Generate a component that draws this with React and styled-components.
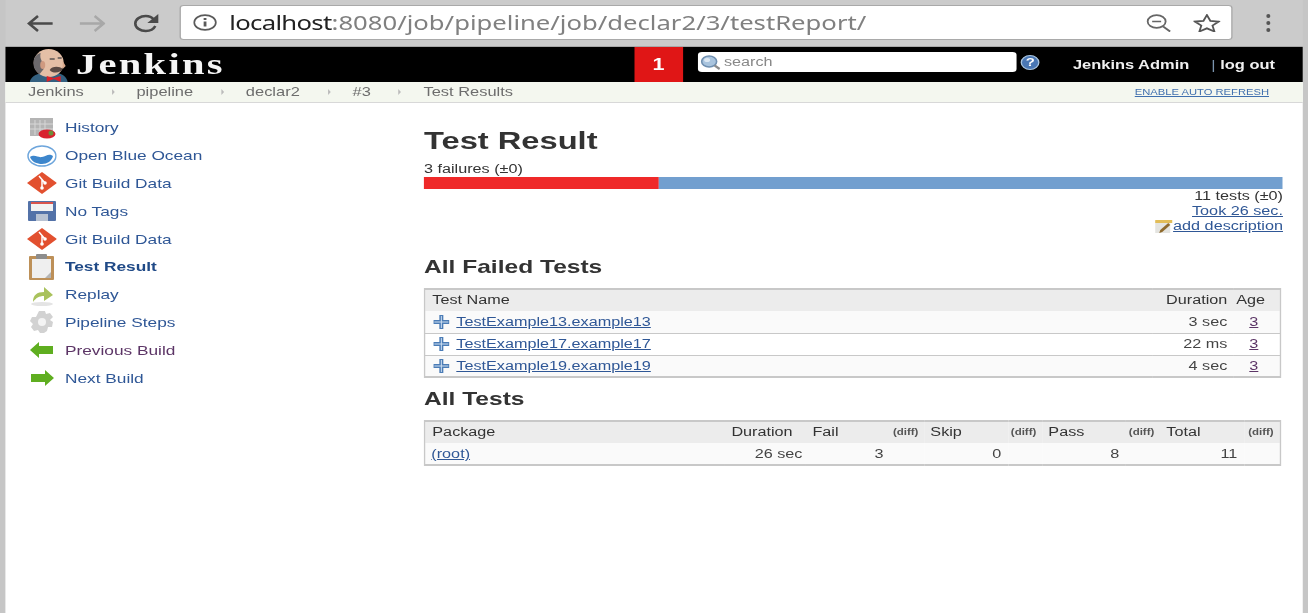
import React from "react";
import styled, { createGlobalStyle } from "styled-components";

// the whole shot is wider than it is tall, so the page is laid out narrow and
// stretched; x() turns a width read off the screenshot into a layout width
const SX = 1.35;
const x = (px) => `${px / SX}px`;

const GlobalStyle = createGlobalStyle`
  html, body { margin: 0; padding: 0; background: #fff; overflow: hidden; }
  body { font-family: "Liberation Sans", Arial, sans-serif; }
`;

const sideItems = [
  { icon: "history", label: "History" },
  { icon: "ocean", label: "Open Blue Ocean" },
  { icon: "git", label: "Git Build Data" },
  { icon: "disk", label: "No Tags" },
  { icon: "git", label: "Git Build Data" },
  { icon: "clipboard", label: "Test Result", active: true },
  { icon: "replay", label: "Replay" },
  { icon: "gear", label: "Pipeline Steps" },
  { icon: "prev", label: "Previous Build", visited: true },
  { icon: "next", label: "Next Build" },
];

const crumbs = ["Jenkins", "pipeline", "declar2", "#3"];

const failed = [
  { name: "TestExample13.example13", duration: "3 sec" },
  { name: "TestExample17.example17", duration: "22 ms" },
  { name: "TestExample19.example19", duration: "4 sec" },
];

// drawn in screen pixels, squeezed here and stretched back by the frame transform
function Glyph({ w, h, children }) {
  return (
    <svg width={w / SX} height={h} viewBox={`0 0 ${w} ${h}`} preserveAspectRatio="none" style={{ flex: "none" }}>
      {children}
    </svg>
  );
}

function ArrowIcon({ flip, color }) {
  return (
    <Glyph w={26} h={17}>
      <path
        d={flip ? "M0 8.5h23M15 1l9 7.5-9 7.5" : "M26 8.5H3M11 1L2 8.5l9 7.5"}
        stroke={color}
        strokeWidth="2.6"
        fill="none"
      />
    </Glyph>
  );
}

function ReloadIcon() {
  return (
    <Glyph w={27} h={19}>
      <path d="M21.5 5.5C19.5 3 17 2 13.5 2 8 2 3 5 3 9.5S8 17 13.5 17c4.5 0 8-2 9.5-5" stroke="#4a4a4a" strokeWidth="2.6" fill="none" />
      <path d="M26 0v9H15z" fill="#4a4a4a" />
    </Glyph>
  );
}

function InfoIcon() {
  return (
    <Glyph w={24} h={17}>
      <ellipse cx="12" cy="8.5" rx="10.8" ry="7.4" fill="none" stroke="#5a5a5a" strokeWidth="1.7" />
      <rect x="10.6" y="7.5" width="2.8" height="5" fill="#5a5a5a" />
      <rect x="10.6" y="4" width="2.8" height="2" fill="#5a5a5a" />
    </Glyph>
  );
}

function ZoomIcon() {
  return (
    <Glyph w={25} h={18}>
      <ellipse cx="10.5" cy="7.5" rx="9" ry="6.4" fill="none" stroke="#666" strokeWidth="1.8" />
      <path d="M6 7.5h9" stroke="#666" strokeWidth="1.6" />
      <path d="M17 12.5l7 5" stroke="#666" strokeWidth="2" />
    </Glyph>
  );
}

function StarIcon() {
  return (
    <Glyph w={27} h={18}>
      <path d="M13.5 1l3.4 5.8 8.6.8-6.4 4 1.9 5.9-7.5-3.2L6 17.5 7.9 11.6 1.5 7.6l8.6-.8z" fill="none" stroke="#555" strokeWidth="1.8" />
    </Glyph>
  );
}

function SearchGlass() {
  return (
    <Glyph w={20} h={15}>
      <ellipse cx="8.5" cy="6.5" rx="7.5" ry="5.5" fill="#a9c4de" stroke="#6f8fb0" strokeWidth="1.6" />
      <ellipse cx="6.5" cy="5" rx="3" ry="2" fill="#dce8f3" />
      <path d="M14 10.5l5 3.5" stroke="#8c8c8c" strokeWidth="2.2" />
    </Glyph>
  );
}

function SideIcon({ type }) {
  if (type === "history") {
    return (
      <Glyph w={30} h={22}>
        <rect x="3" y="1" width="23" height="18" fill="#b4b4b4" />
        <path d="M8 3v15M13 3v15M18 3v15M3 7h23M3 12h23" stroke="#d8d8d8" />
        <ellipse cx="20" cy="17" rx="8.5" ry="4.5" fill="#d8232f" />
        <circle cx="24" cy="16" r="2.5" fill="#6b8f3a" />
      </Glyph>
    );
  }
  if (type === "ocean") {
    return (
      <Glyph w={30} h={22}>
        <ellipse cx="15" cy="11" rx="14" ry="10" fill="#fff" stroke="#6ea6dc" strokeWidth="1.5" />
        <path d="M3 12c5-3 8 1 12 0s7-4 11-1c-1 5-6 8-11 8S5 17 3 12z" fill="#3d86cc" />
      </Glyph>
    );
  }
  if (type === "git") {
    return (
      <Glyph w={30} h={22}>
        <path d="M15 0l15 11-15 11L0 11z" fill="#e2502f" />
        <path d="M12 4l6 7M15 8v8" stroke="#fff" strokeWidth="1.5" />
        <circle cx="18" cy="11" r="1.8" fill="#fff" />
        <circle cx="15" cy="16" r="1.8" fill="#fff" />
      </Glyph>
    );
  }
  if (type === "disk") {
    return (
      <Glyph w={30} h={22}>
        <rect x="1" y="1" width="28" height="20" rx="1" fill="#5372a8" />
        <rect x="4" y="2" width="22" height="9" fill="#f2f2f2" />
        <rect x="4" y="2" width="22" height="2" fill="#d9544d" />
        <rect x="9" y="14" width="12" height="7" fill="#b8c2d2" />
      </Glyph>
    );
  }
  if (type === "clipboard") {
    return (
      <Glyph w={30} h={26}>
        <rect x="2" y="2" width="25" height="24" rx="1" fill="#bd9058" />
        <rect x="5" y="5" width="19" height="19" fill="#efefef" />
        <path d="M24 18v6h-6z" fill="#b5b5b5" />
        <rect x="9" y="0" width="11" height="5" rx="1" fill="#8d8d8d" />
      </Glyph>
    );
  }
  if (type === "replay") {
    return (
      <Glyph w={30} h={24}>
        <ellipse cx="15" cy="21" rx="11" ry="2" fill="#e4e4e4" />
        <path d="M6 19c0-7 4-10 11-10V4l9 8-9 6v-5c-5 0-8 2-11 6z" fill="#a9c25c" />
      </Glyph>
    );
  }
  if (type === "gear") {
    return (
      <Glyph w={30} h={24}>
        <path
          d="M12 1h6l1 3 4-1 3 4-3 3 3 2-1 5-4 0-1 4-3 2h-4l-2-3-4 1-3-4 2-3-3-3 2-4 4 0z"
          fill="#d2d2d2"
        />
        <circle cx="15" cy="12" r="4" fill="#f4f4f4" />
      </Glyph>
    );
  }
  const points = type === "prev"
    ? "3,11 12,3 12,7 26,7 26,15 12,15 12,19"
    : "27,11 18,3 18,7 4,7 4,15 18,15 18,19";
  return (
    <Glyph w={30} h={22}>
      <polygon points={points} fill="#5fae20" />
    </Glyph>
  );
}

function JenkinsHead() {
  return (
    <Glyph w={40} h={34}>
      <path d="M0 34c1-5 6-8 12-9h16c5 1 9 4 10 9z" fill="#34607f" />
      <ellipse cx="19" cy="15" rx="15" ry="14" fill="#e4bfa6" />
      <path d="M33 13l3 5-3 3z" fill="#d9a98c" />
      <path d="M4 17C3 11 6 6 11 5c-1 3 0 6 1 8l2 8-4 5c-3-2-6-5-6-9z" fill="#6b686b" />
      <ellipse cx="13" cy="17" rx="2.5" ry="4" fill="#cf9a80" />
      <path d="M20 11h5M28 10h4" stroke="#5b5452" strokeWidth="1.4" />
      <path d="M20 22c2-4 10-4 13-1-2 4-10 5-13 1z" fill="#5a4a44" />
      <path d="M17 34l7-3 7 3v-6l-7 2-7-2z" fill="#d8222a" />
    </Glyph>
  );
}

function ExpandIcon() {
  return (
    <Glyph w={16} h={14}>
      <path d="M6 0h4v5h6v4h-6v5H6V9H0V5h6z" fill="#4b7cb6" />
      <path d="M8 1v12M1 7h14" stroke="#cfe0f2" strokeWidth="1" />
    </Glyph>
  );
}

function NoteIcon() {
  return (
    <Glyph w={19} h={15}>
      <rect x="1" y="2" width="15" height="12" fill="#e4e4e0" />
      <rect x="1" y="1" width="17" height="3" fill="#e2bd58" />
      <path d="M6 11l8-7 2 2-8 7-3 1z" fill="#8f6a2c" />
    </Glyph>
  );
}

export default function App() {
  return (
    <>
      <GlobalStyle />
      <Frame>
        <Toolbar>
          <NavGroup>
            <ArrowIcon color="#4a4a4a" />
            <ArrowIcon flip color="#a8a8a8" />
            <ReloadIcon />
          </NavGroup>
          <Omnibox>
            <InfoIcon />
            <Url>
              <strong>localhost</strong>:8080/job/pipeline/job/declar2/3/testReport/
            </Url>
            <OmniIcons>
              <ZoomIcon />
              <StarIcon />
            </OmniIcons>
          </Omnibox>
          <MenuDots><i /><i /><i /></MenuDots>
        </Toolbar>
        <Page>
          <Header>
            <Logo>
              <JenkinsHead />
              <LogoText>Jenkins</LogoText>
            </Logo>
            <Badge>1</Badge>
            <SearchBox>
              <SearchGlass />
              <span>search</span>
            </SearchBox>
            <HelpDot>?</HelpDot>
            <UserLink>Jenkins Admin</UserLink>
            <LogOut><em>|</em> log out</LogOut>
          </Header>
          <Breadcrumbs>
            {crumbs.map((c) => (
              <React.Fragment key={c}>
                <Crumb>{c}</Crumb>
                <CrumbArrow />
              </React.Fragment>
            ))}
            <Crumb>Test Results</Crumb>
            <AutoRefresh href="#">ENABLE AUTO REFRESH</AutoRefresh>
          </Breadcrumbs>
          <Body>
            <Sidebar>
              {sideItems.map((item, i) => (
                <SideItem key={i}>
                  <IconSlot><SideIcon type={item.icon} /></IconSlot>
                  <SideLabel $active={item.active} $visited={item.visited}>{item.label}</SideLabel>
                </SideItem>
              ))}
            </Sidebar>
            <Main>
              <Title>Test Result</Title>
              <Failures>3 failures (±0)</Failures>
              <ResultBar>
                <BarPart $color="#ef2929" style={{ width: `${(3 / 11.0) * 100}%` }} />
                <BarPart $color="#729fcf" style={{ flex: 1 }} />
              </ResultBar>
              <Summary>
                <div>11 tests (±0)</div>
                <SummaryLink href="#">Took 26 sec.</SummaryLink>
                <Description><NoteIcon /><SummaryLink href="#">add description</SummaryLink></Description>
              </Summary>
              <FailedHeading>All Failed Tests</FailedHeading>
              <Table>
                <thead>
                  <HeadRow>
                    <Th $pl={7}>Test Name</Th>
                    <Th $w={80} $right>Duration</Th>
                    <Th $w={47} $pl={3}>Age</Th>
                  </HeadRow>
                </thead>
                <tbody>
                  {failed.map((t) => (
                    <Row key={t.name}>
                      <Td $pl={8}>
                        <TestName><ExpandIcon /><a href="#">{t.name}</a></TestName>
                      </Td>
                      <Td $right>{t.duration}</Td>
                      <Td $pl={3}><AgeLink href="#">3</AgeLink></Td>
                    </Row>
                  ))}
                </tbody>
              </Table>
              <TestsHeading>All Tests</TestsHeading>
              <Table>
                <thead>
                  <HeadRow>
                    <Th $pl={7}>Package</Th>
                    <Th $w={81} $pl={7}>Duration</Th>
                    <Th $w={85} $pl={7}>Fail</Th>
                    <Diff $w={34}>(diff)</Diff>
                    <Th $w={84}>Skip</Th>
                    <Diff $w={34}>(diff)</Diff>
                    <Th $w={84}>Pass</Th>
                    <Diff $w={34}>(diff)</Diff>
                    <Th $w={84}>Total</Th>
                    <Diff $w={36}>(diff)</Diff>
                  </HeadRow>
                </thead>
                <tbody>
                  <Row>
                    <Td $pl={6}><a href="#">(root)</a></Td>
                    <Td $right $pr={3}>26 sec</Td>
                    <Td $right $pr={7}>3</Td>
                    <Td />
                    <Td $right $pr={7}>0</Td>
                    <Td />
                    <Td $right $pr={7}>8</Td>
                    <Td />
                    <Td $right $pr={7}>11</Td>
                    <Td />
                  </Row>
                </tbody>
              </Table>
            </Main>
          </Body>
        </Page>
      </Frame>
    </>
  );
}

const Frame = styled.div`
  width: ${x(1308)};
  height: 613px;
  box-sizing: border-box;
  padding: 0 ${x(5)};
  background: #c6c6c6;
  display: flex;
  flex-direction: column;
  overflow: hidden;
  transform: scaleX(${SX});
  transform-origin: 0 0;
  filter: blur(0.4px);
`;

const Toolbar = styled.div`
  height: 46px;
  flex: none;
  display: flex;
  align-items: center;
  padding-left: ${x(22)};
  background: #cbcbcb;
  border-bottom: 1px solid #a8a8a8;
`;

const NavGroup = styled.div`
  width: ${x(153)};
  flex: none;
  display: flex;
  align-items: center;
  gap: ${x(27)};
`;

const Omnibox = styled.div`
  width: ${x(1053)};
  height: 35px;
  flex: none;
  box-sizing: border-box;
  display: flex;
  align-items: center;
  padding: 0 ${x(11)} 0 ${x(12)};
  margin-top: -1px;
  background: #fff;
  border: 1px solid #a9a9a9;
  border-radius: 3px;
`;

const Url = styled.div`
  flex: 1;
  margin-left: ${x(12)};
  font-family: "Noto Sans", "Liberation Sans", sans-serif;
  font-size: 19px;
  color: #808080;
  white-space: nowrap;
  strong { font-weight: 400; letter-spacing: -0.5px; color: #222; }
`;

const OmniIcons = styled.div`
  display: flex;
  align-items: center;
  gap: ${x(22)};
`;

const MenuDots = styled.div`
  display: flex;
  flex-direction: column;
  gap: 3px;
  margin-left: ${x(33)};
  i { width: ${x(4)}; height: 4px; border-radius: 50%; background: #555; }
`;

const Page = styled.div`
  flex: 1;
  margin-left: ${x(1)};
  background: #fff;
  display: flex;
  flex-direction: column;
  min-height: 0;
`;

const Header = styled.div`
  height: 35px;
  flex: none;
  background: #000;
  display: flex;
  align-items: center;
`;

const Logo = styled.div`
  width: ${x(628)};
  flex: none;
  align-self: stretch;
  box-sizing: border-box;
  display: flex;
  align-items: flex-end;
  padding-left: ${x(24)};
`;

const LogoText = styled.div`
  margin-left: ${x(6)};
  font-family: "Liberation Serif", serif;
  font-weight: 700;
  font-size: 30px;
  letter-spacing: 1.7px;
  line-height: 37px;
  color: #f5f5f5;
`;

const Badge = styled.div`
  width: ${x(49)};
  flex: none;
  align-self: stretch;
  display: flex;
  align-items: center;
  justify-content: center;
  background: #e01616;
  color: #fff;
  font-weight: 700;
  font-size: 16px;
`;

const SearchBox = styled.div`
  width: ${x(319)};
  height: 20px;
  flex: none;
  box-sizing: border-box;
  display: flex;
  align-items: center;
  gap: ${x(3)};
  margin: -5px 0 0 ${x(15)};
  padding-left: ${x(3)};
  background: #fff;
  border-radius: 3px;
  color: #888;
  font-size: 12px;
`;

const HelpDot = styled.div`
  width: ${x(19)};
  height: 15px;
  flex: none;
  box-sizing: border-box;
  margin: -4px 0 0 ${x(4)};
  border-radius: 50%;
  background: #4a77b4;
  border: 1px solid #a9c4de;
  color: #fff;
  font-size: 11px;
  font-weight: 700;
  line-height: 13px;
  text-align: center;
`;

const UserLink = styled.div`
  margin-left: ${x(33)};
  color: #f0f0f0;
  font-size: 12.2px;
  font-weight: 700;
  white-space: nowrap;
`;

const LogOut = styled.div`
  margin-left: ${x(22)};
  color: #f0f0f0;
  font-size: 12.2px;
  font-weight: 700;
  white-space: nowrap;
  em { font-style: normal; font-weight: 400; color: #7a93ad; }
`;

const Breadcrumbs = styled.div`
  height: 21px;
  flex: none;
  box-sizing: border-box;
  display: flex;
  align-items: center;
  padding: 0 ${x(34)} 0 ${x(22)};
  background: #f4f7ef;
  border-bottom: 1px solid #d8d8d8;
`;

const Crumb = styled.span`
  font-size: 12.2px;
  color: #6d6d6d;
  white-space: nowrap;
`;

const CrumbArrow = styled.i`
  width: 0;
  height: 0;
  margin: 0 ${x(22)} 0 ${x(28)};
  border-left: ${x(4)} solid #bbb;
  border-top: 3px solid transparent;
  border-bottom: 3px solid transparent;
`;

const AutoRefresh = styled.a`
  margin-left: auto;
  font-size: 8.3px;
  color: #3f6fae;
  white-space: nowrap;
`;

const Body = styled.div`
  flex: 1;
  display: flex;
  min-height: 0;
`;

const Sidebar = styled.div`
  width: ${x(418)};
  flex: none;
  box-sizing: border-box;
  padding: 11px 0 0 ${x(21)};
  display: flex;
  flex-direction: column;
`;

const SideItem = styled.div`
  height: 27.8px;
  display: flex;
  align-items: center;
`;

const IconSlot = styled.div`
  width: ${x(38)};
  flex: none;
  display: flex;
`;

const SideLabel = styled.span`
  font-size: 12.8px;
  font-weight: ${(p) => (p.$active ? 700 : 400)};
  color: ${(p) => (p.$active ? "#204a87" : p.$visited ? "#5c3566" : "#2f5796")};
  white-space: nowrap;
`;

const Main = styled.div`
  width: ${x(859)};
  flex: none;
  padding-top: 23px;
  color: #333;
`;

const Title = styled.h1`
  margin: 0;
  font-size: 24.2px;
  line-height: 30px;
  color: #333;
`;

const Failures = styled.div`
  margin-top: 5px;
  font-size: 12px;
  line-height: 16px;
`;

const ResultBar = styled.div`
  display: flex;
  height: 12px;
`;

const BarPart = styled.div`
  background: ${(p) => p.$color};
`;

const Summary = styled.div`
  display: flex;
  flex-direction: column;
  align-items: flex-end;
  font-size: 12px;
  line-height: 15px;
`;

const SummaryLink = styled.a`
  color: #2f5796;
  text-decoration: underline;
`;

const Description = styled.div`
  display: flex;
  align-items: center;
`;

const Heading = styled.h2`
  margin: 0;
  font-size: 18.2px;
  line-height: 22px;
  color: #333;
`;

const FailedHeading = styled(Heading)`
  margin: 22px 0 10px;
`;

const TestsHeading = styled(Heading)`
  margin: 10px 0 10px;
`;

const Table = styled.table`
  width: ${x(857)};
  table-layout: fixed;
  border-collapse: collapse;
  border: 2px solid #c8c8c8;
  border-left-width: 1px;
  border-right-width: 1px;
  font-size: 12px;
`;

const HeadRow = styled.tr`
  background: #ececec;
`;

const Th = styled.th`
  width: ${(p) => (p.$w ? x(p.$w) : "auto")};
  height: 22px;
  box-sizing: border-box;
  padding: 0 ${x(6)} 2px ${(p) => x(p.$pl ?? 6)};
  font-weight: 400;
  text-align: ${(p) => (p.$right ? "right" : "left")};
  color: #333;
  white-space: nowrap;
`;

const Diff = styled(Th)`
  padding: 0 ${x(6)} 2px 0;
  font-size: 8.5px;
  font-weight: 700;
  text-align: right;
  color: #555;
`;

const Row = styled.tr`
  height: 22px;
  border-top: 1px solid #c8c8c8;
  background: #fafafa;
  &:first-child { border-top: none; }
  &:nth-child(even) { background: #fff; }
`;

const Td = styled.td`
  padding: 0 ${(p) => x(p.$pr ?? 6)} 0 ${(p) => x(p.$pl ?? 6)};
  text-align: ${(p) => (p.$right ? "right" : "left")};
  color: #444;
  white-space: nowrap;
  a { color: #2f5796; }
`;

const TestName = styled.div`
  display: flex;
  align-items: center;
  gap: ${x(7)};
`;

const AgeLink = styled.a`
  margin-left: ${x(13)};
  && { color: #5c3566; }
`;
